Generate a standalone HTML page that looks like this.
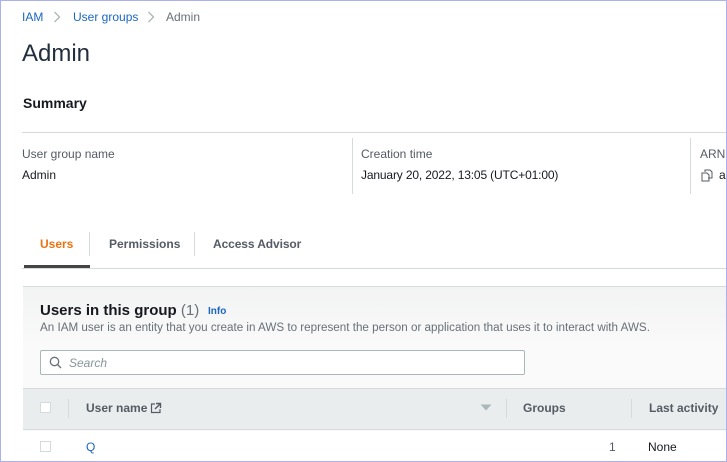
<!DOCTYPE html>
<html><head><meta charset="utf-8"><style>
*{margin:0;padding:0;box-sizing:border-box}
body{width:727px;height:462px;overflow:hidden;background:#fff;font-family:"Liberation Sans",Arial,sans-serif;position:relative;color:#16191f}
.a{position:absolute;white-space:nowrap}
.frame{position:absolute;left:0;top:0;width:727px;height:462px;border:1px solid #aab0f0;pointer-events:none;z-index:10}
</style></head><body>
<div class="a" style="left:22px;top:10px;font-size:12px;color:#1a66c0">IAM</div>
<svg class="a" style="left:53px;top:11px" width="8" height="12"><path d="M1.5 1l5 5-5 5" fill="none" stroke="#aab7b8" stroke-width="1.3"/></svg>
<div class="a" style="left:73px;top:10px;font-size:12px;color:#1a66c0">User groups</div>
<svg class="a" style="left:147px;top:11px" width="8" height="12"><path d="M1.5 1l5 5-5 5" fill="none" stroke="#aab7b8" stroke-width="1.3"/></svg>
<div class="a" style="left:166px;top:10px;font-size:12px;color:#687078">Admin</div>
<div class="a" style="left:22px;top:40px;font-size:24px;color:#232f3e">Admin</div>
<div class="a" style="left:23px;top:95px;font-size:14px;font-weight:bold;color:#16191f">Summary</div>
<div class="a" style="left:22px;top:132px;width:705px;height:1px;background:#d5dbdb"></div>
<div class="a" style="left:22px;top:147px;font-size:12px;color:#545b64">User group name</div>
<div class="a" style="left:22px;top:168px;font-size:12px;color:#16191f">Admin</div>
<div class="a" style="left:352px;top:138px;width:1px;height:56px;background:#d5dbdb"></div>
<div class="a" style="left:361px;top:147px;font-size:12px;color:#545b64">Creation time</div>
<div class="a" style="left:361px;top:168px;font-size:12px;color:#16191f;letter-spacing:-0.15px">January 20, 2022, 13:05 (UTC+01:00)</div>
<div class="a" style="left:690px;top:138px;width:1px;height:56px;background:#d5dbdb"></div>
<div class="a" style="left:700px;top:147px;font-size:12px;color:#545b64">ARN</div>
<svg class="a" style="left:701px;top:169px" width="12" height="13"><path d="M4 3V1h5l2 2v6H7M1 4h5l2 2v6H1z" fill="none" stroke="#545b64" stroke-width="1"/></svg>
<div class="a" style="left:719px;top:168px;font-size:12px">a</div>
<div class="a" style="left:40px;top:237px;font-size:12px;font-weight:bold;color:#ec7211">Users</div>
<div class="a" style="left:89px;top:232px;width:1px;height:24px;background:#d5dbdb"></div>
<div class="a" style="left:109px;top:237px;font-size:12px;font-weight:bold;color:#545b64">Permissions</div>
<div class="a" style="left:194px;top:232px;width:1px;height:24px;background:#d5dbdb"></div>
<div class="a" style="left:213px;top:237px;font-size:12px;font-weight:bold;color:#545b64;letter-spacing:-0.1px">Access Advisor</div>
<div class="a" style="left:22px;top:268px;width:705px;height:1px;background:#d5dbdb"></div>
<div class="a" style="left:24px;top:265px;width:66px;height:3px;background:#444"></div>
<div class="a" style="left:23px;top:286px;width:704px;height:176px;background:linear-gradient(#f2f3f3,#fafafa 60px,#fafafa);border-top:1px solid #d5dbdb"></div>
<div class="a" style="left:40px;top:302px;font-size:15px;font-weight:bold;color:#16191f">Users in this group <span style="font-weight:normal;color:#687078">(1)</span></div>
<div class="a" style="left:208px;top:306px;font-size:10px;font-weight:bold;color:#1a66c0">Info</div>
<div class="a" style="left:40px;top:321px;font-size:11.65px;color:#687078">An IAM user is an entity that you create in AWS to represent the person or application that uses it to interact with AWS.</div>
<div class="a" style="left:40px;top:350px;width:485px;height:25px;background:#fff;border:1px solid #aab7b8;border-radius:2px"></div>
<svg class="a" style="left:49px;top:356px" width="13" height="13"><circle cx="5.5" cy="5.5" r="4.2" fill="none" stroke="#687078" stroke-width="1.3"/><path d="M8.5 8.5l3.5 3.5" stroke="#687078" stroke-width="1.3"/></svg>
<div class="a" style="left:69px;top:356px;font-size:12px;font-style:italic;color:#879596">Search</div>
<div class="a" style="left:23px;top:388px;width:704px;height:42px;background:#eaeded;border-top:1px solid #d5dbdb;border-bottom:1px solid #d5dbdb"></div>
<div class="a" style="left:40px;top:402px;width:11px;height:11px;background:#fff;border:1px solid #d5dbdb"></div>
<div class="a" style="left:68px;top:399px;width:1px;height:19px;background:#d5dbdb"></div>
<div class="a" style="left:86px;top:401px;font-size:12px;font-weight:bold;color:#545b64">User name</div>
<svg class="a" style="left:150px;top:402px" width="12" height="12"><path d="M5 2H1.5v8.5H10V7" fill="none" stroke="#545b64" stroke-width="1.2"/><path d="M6 1.5h4.5V6M10.5 1.5L5 7" fill="none" stroke="#545b64" stroke-width="1.4"/></svg>
<svg class="a" style="left:480px;top:404px" width="12" height="8"><path d="M0.5 0.5h11l-5.5 6z" fill="#aab7b8"/></svg>
<div class="a" style="left:506px;top:399px;width:1px;height:19px;background:#d5dbdb"></div>
<div class="a" style="left:523px;top:401px;font-size:12px;font-weight:bold;color:#545b64">Groups</div>
<div class="a" style="left:631px;top:399px;width:1px;height:19px;background:#d5dbdb"></div>
<div class="a" style="left:649px;top:401px;font-size:12px;font-weight:bold;color:#545b64">Last activity</div>
<div class="a" style="left:23px;top:431px;width:704px;height:31px;background:#fff"></div>
<div class="a" style="left:40px;top:441px;width:11px;height:11px;background:#fff;border:1px solid #d5dbdb"></div>
<div class="a" style="left:86px;top:440px;font-size:12px;color:#1a66c0">Q</div>
<div class="a" style="left:609px;top:440px;font-size:12px;color:#545b64">1</div>
<div class="a" style="left:648px;top:440px;font-size:12px;color:#16191f">None</div>
<div class="frame"></div>
</body></html>
